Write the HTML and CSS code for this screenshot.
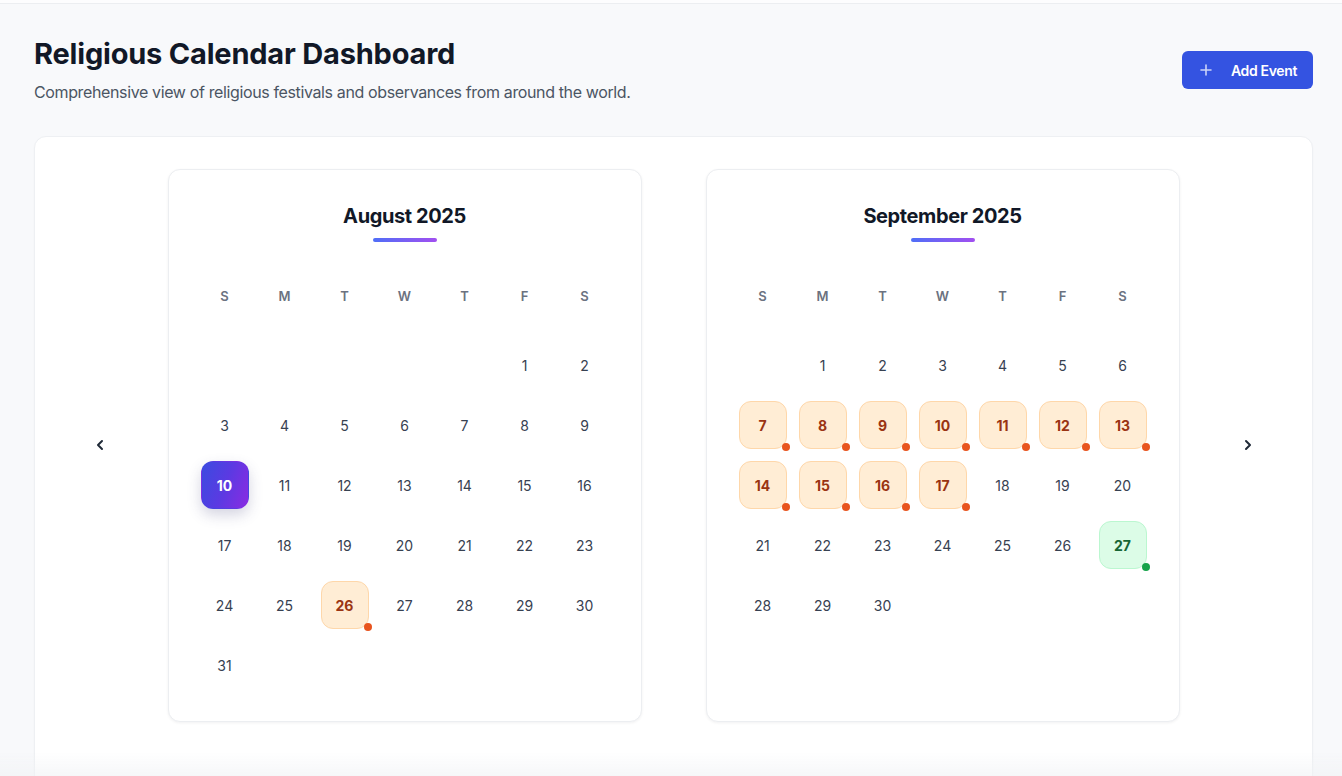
FILE: index.html
```html
<!DOCTYPE html>
<html lang="en">
<head>
<meta charset="utf-8">
<title>Religious Calendar Dashboard</title>
<link rel="stylesheet" href="styles.css">
</head>
<body>
<div class="topbar"></div>
<main class="page">
  <header class="header">
    <div class="header-text">
      <h1 class="title">Religious Calendar Dashboard</h1>
      <p class="subtitle">Comprehensive view of religious festivals and observances from around the world.</p>
    </div>
    <button class="add-btn" type="button">
      <svg class="plus" width="16" height="16" viewBox="0 0 16 16" fill="none" stroke="currentColor" stroke-width="1.6" stroke-linecap="round"><path d="M8 3v10M3 8h10"/></svg>
      <span>Add Event</span>
    </button>
  </header>

  <section class="panel">
    <button class="nav-btn" type="button" aria-label="Previous">
      <svg width="16" height="16" viewBox="0 0 16 16" fill="none" stroke="currentColor" stroke-width="2" stroke-linecap="round" stroke-linejoin="round"><path d="M10 4l-4 4 4 4"/></svg>
    </button>

    <div class="months">
      <div class="month">
        <h2 class="month-title">August 2025</h2>
        <div class="month-bar"></div>
        <div class="weekdays">
          <span>S</span><span>M</span><span>T</span><span>W</span><span>T</span><span>F</span><span>S</span>
        </div>
        <div class="days">
          <span class="day empty"></span><span class="day empty"></span><span class="day empty"></span><span class="day empty"></span><span class="day empty"></span>
          <span class="day">1</span><span class="day">2</span>
          <span class="day">3</span><span class="day">4</span><span class="day">5</span><span class="day">6</span><span class="day">7</span><span class="day">8</span><span class="day">9</span>
          <span class="day today">10</span><span class="day">11</span><span class="day">12</span><span class="day">13</span><span class="day">14</span><span class="day">15</span><span class="day">16</span>
          <span class="day">17</span><span class="day">18</span><span class="day">19</span><span class="day">20</span><span class="day">21</span><span class="day">22</span><span class="day">23</span>
          <span class="day">24</span><span class="day">25</span><span class="day event">26<i class="dot"></i></span><span class="day">27</span><span class="day">28</span><span class="day">29</span><span class="day">30</span>
          <span class="day">31</span>
        </div>
      </div>

      <div class="month">
        <h2 class="month-title">September 2025</h2>
        <div class="month-bar"></div>
        <div class="weekdays">
          <span>S</span><span>M</span><span>T</span><span>W</span><span>T</span><span>F</span><span>S</span>
        </div>
        <div class="days">
          <span class="day empty"></span>
          <span class="day">1</span><span class="day">2</span><span class="day">3</span><span class="day">4</span><span class="day">5</span><span class="day">6</span>
          <span class="day event">7<i class="dot"></i></span><span class="day event">8<i class="dot"></i></span><span class="day event">9<i class="dot"></i></span><span class="day event">10<i class="dot"></i></span><span class="day event">11<i class="dot"></i></span><span class="day event">12<i class="dot"></i></span><span class="day event">13<i class="dot"></i></span>
          <span class="day event">14<i class="dot"></i></span><span class="day event">15<i class="dot"></i></span><span class="day event">16<i class="dot"></i></span><span class="day event">17<i class="dot"></i></span><span class="day">18</span><span class="day">19</span><span class="day">20</span>
          <span class="day">21</span><span class="day">22</span><span class="day">23</span><span class="day">24</span><span class="day">25</span><span class="day">26</span><span class="day event green">27<i class="dot"></i></span>
          <span class="day">28</span><span class="day">29</span><span class="day">30</span>
        </div>
      </div>
    </div>

    <button class="nav-btn" type="button" aria-label="Next">
      <svg width="16" height="16" viewBox="0 0 16 16" fill="none" stroke="currentColor" stroke-width="2" stroke-linecap="round" stroke-linejoin="round"><path d="M6 4l4 4-4 4"/></svg>
    </button>
  </section>
</main>
<div class="bottom-fade"></div>
</body>
</html>
```

FILE: styles.css
```css
* { box-sizing: border-box; }

html, body {
  margin: 0;
  padding: 0;
}

body {
  background: #f8f9fb;
  font-family: Inter, "Noto Sans", "Liberation Sans", sans-serif;
  color: #111827;
  height: 776px;
  overflow: hidden;
}

.topbar {
  height: 4px;
  background: #fdfdfe;
  border-bottom: 1px solid #eceef1;
}

.page {
  padding: 32px 29px 0 34px;
}

.header {
  display: flex;
  align-items: center;
  justify-content: space-between;
}

.title {
  margin: 0;
  font-size: 29px;
  line-height: 36px;
  font-weight: 700;
  letter-spacing: -0.2px;
  color: #111827;
}

.subtitle {
  margin: 8px 0 0;
  font-size: 16px;
  line-height: 24px;
  letter-spacing: -0.37px;
  color: #4b5563;
}

.add-btn {
  display: flex;
  align-items: center;
  gap: 17px;
  height: 38px;
  padding: 0 16px;
  border: none;
  border-radius: 6px;
  background: #3453e1;
  color: #ffffff;
  font-family: Inter, "Noto Sans", "Liberation Sans", sans-serif;
  font-size: 14px;
  font-weight: 600;
  letter-spacing: -0.35px;
  cursor: pointer;
}

.plus { color: rgba(255, 255, 255, 0.75); }

.panel {
  margin-top: 32px;
  background: #ffffff;
  border: 1px solid #eef0f3;
  border-radius: 12px;
  padding: 32px;
  display: flex;
  align-items: flex-start;
  justify-content: center;
  gap: 48px;
  min-height: 700px;
  box-shadow: 0 1px 2px rgba(16, 24, 40, 0.03);
}

.nav-btn {
  width: 40px;
  height: 40px;
  border: none;
  background: transparent;
  color: #1f2937;
  display: flex;
  align-items: center;
  justify-content: center;
  padding: 0;
  margin-top: 256px;
  cursor: pointer;
}

.months {
  display: flex;
  gap: 64px;
}

.month {
  width: 474px;
  background: #ffffff;
  border: 1px solid #eceef1;
  border-radius: 12px;
  padding: 32px;
  box-shadow: 0 1px 3px rgba(16, 24, 40, 0.06);
  height: 553px;
}

.month-title {
  margin: 0;
  text-align: center;
  font-size: 20px;
  line-height: 28px;
  font-weight: 700;
  letter-spacing: -0.4px;
  color: #111827;
}

.month-bar {
  width: 64px;
  height: 4px;
  margin: 8px auto 0;
  border-radius: 2px;
  background: linear-gradient(90deg, #4f6ef7, #a24ff0);
}

.weekdays {
  margin-top: 30px;
  display: grid;
  grid-template-columns: repeat(7, 48px);
  column-gap: 12px;
  height: 48px;
  align-items: center;
  margin-bottom: 21px;
}

.weekdays span {
  text-align: center;
  font-size: 13px;
  font-weight: 600;
  color: #6b7280;
}

.days {
  display: grid;
  grid-template-columns: repeat(7, 48px);
  grid-auto-rows: 48px;
  gap: 12px;
}

.day {
  position: relative;
  display: flex;
  align-items: center;
  justify-content: center;
  font-size: 14px;
  color: #374151;
  border-radius: 12px;
  border: 1px solid transparent;
}

.day.today {
  background: linear-gradient(110deg, #3b4be0 0%, #5b3ae2 50%, #8a2be2 100%);
  color: #ffffff;
  font-weight: 700;
  box-shadow: 0 6px 14px rgba(60, 60, 120, 0.22);
}

.day.event {
  background: #ffedd5;
  border-color: #fed7aa;
  color: #9a3412;
  font-weight: 700;
}

.day.green {
  background: #dcfce7;
  border-color: #bbf7d0;
  color: #166534;
}

.dot {
  position: absolute;
  right: -4px;
  bottom: -3px;
  width: 8px;
  height: 8px;
  border-radius: 50%;
  background: #e8541e;
}

.green .dot { background: #16a34a; }

.bottom-fade {
  position: fixed;
  left: 0;
  right: 0;
  bottom: 0;
  height: 24px;
  background: linear-gradient(180deg, rgba(240, 242, 245, 0), rgba(240, 242, 245, 0.6));
  pointer-events: none;
}
```
